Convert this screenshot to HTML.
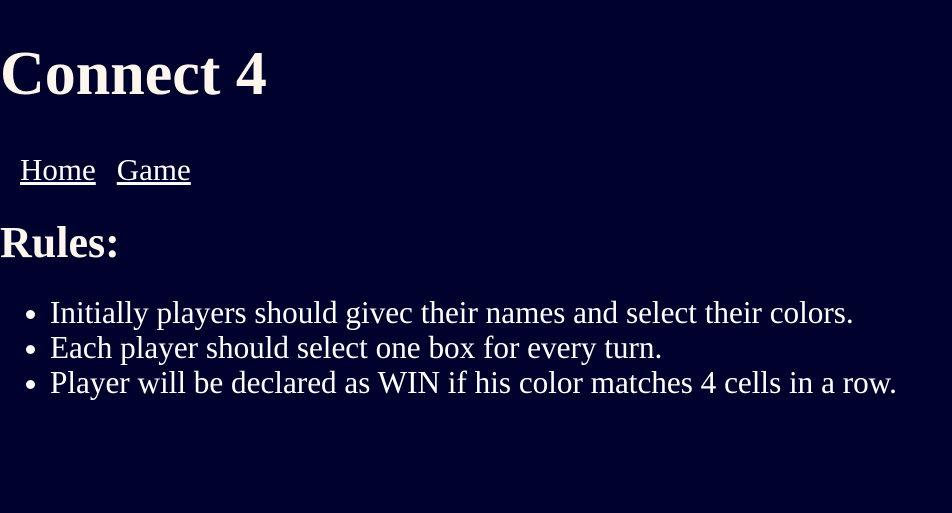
<!DOCTYPE html>
<html><head><style>
html,body{margin:0;padding:0;width:952px;height:513px;background:#00022e;overflow:hidden;font-family:"Liberation Serif",serif;}
.a{position:absolute;line-height:1;white-space:nowrap;margin:0;}
h1{font-size:62px;font-weight:bold;color:#fdf6ec;left:0;top:43px;}
h2{font-size:44px;font-weight:bold;color:#fdf6ec;left:0;top:221px;}
.nav{font-size:31px;left:20px;top:154px;color:#fff;}
.nav a{color:#fff;text-decoration:underline;margin-right:21px;}
.li{font-size:31.2px;color:#fff;left:50px;}
.li:before{content:"";position:absolute;left:-24px;top:13px;width:9px;height:9px;border-radius:50%;background:#fff;}
</style></head><body>
<h1 class="a">Connect 4</h1>
<div class="a nav"><a>Home</a><a>Game</a></div>
<h2 class="a">Rules:</h2>
<div class="a li" style="top:297px">Initially players should givec their names and select their colors.</div>
<div class="a li" style="top:332px">Each player should select one box for every turn.</div>
<div class="a li" style="top:367px">Player will be declared as WIN if his color matches 4 cells in a row.</div>
</body></html>
